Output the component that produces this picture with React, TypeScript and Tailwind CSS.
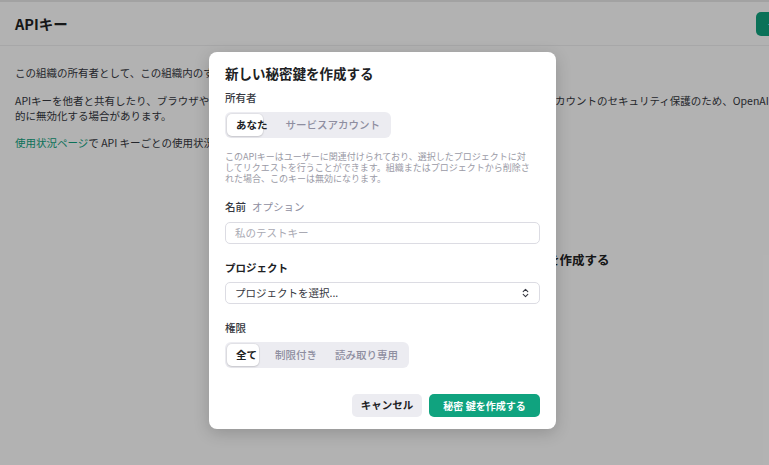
import React from "react";

function Segmented({
  items,
  pillWidth,
}: {
  items: string[];
  pillWidth: number;
}) {
  return (
    <div className="relative flex h-[26px] items-stretch self-start rounded-[6px] bg-[#ececf1] p-[2px]">
      <div
        className="absolute left-[2px] top-[2px] bottom-[2px] rounded-[5px] bg-white shadow-[0_0_0_1px_rgba(0,0,0,0.04),0_1px_2px_rgba(0,0,0,0.12)]"
        style={{ width: pillWidth }}
      />
      {items.map((it, i) => (
        <div
          key={it}
          className={
            i === 0
              ? "relative flex items-center px-[9px] text-[10.5px] leading-none font-semibold text-[#202123]"
              : "relative flex items-center px-[9px] text-[10.5px] leading-none font-medium text-[#8e8ea0]"
          }
        >
          {it}
        </div>
      ))}
    </div>
  );
}

export default function App() {
  return (
    <div className="relative h-[465px] w-[769px] overflow-hidden bg-white font-['Noto_Sans_CJK_JP','Noto_Sans',sans-serif] text-[#353740]">
      <div className="w-[1060px]">
        <div className="h-[2px] bg-[#e8e8e8]" />
        <div className="flex h-[44px] w-[919px] items-center border-b border-[#efeff1] px-[15px]">
          <div className="text-[14.5px] font-semibold text-[#202123]">APIキー</div>
          <div className="flex-1" />
          <div className="flex h-[24px] items-center rounded-[5px] bg-[#10a37f] px-[12px] text-[10.5px] font-semibold text-white">
            + 新しい秘密鍵を作成する
          </div>
        </div>
        <div className="px-[15px] pt-[19px] text-[10.5px] leading-[15px]">
          <p>この組織の所有者として、この組織内のすべてのAPIキーを表示および管理できます。</p>
          <p className="mt-[13px] whitespace-nowrap">
            APIキーを他者と共有したり、ブラウザやその他のクライアントサイドのコードで公開したりしないでください。アカウントのセキュリティ保護のため、OpenAIは公開されていることが判明したAPIキーを自動
            <br />
            的に無効化する場合があります。
          </p>
          <p className="mt-[12px]">
            <span className="text-[#10a37f]">使用状況ページ</span>で API キーごとの使用状況を確認できます。
          </p>
          <div className="mt-[102px] pl-[449px] text-[12.5px] font-semibold text-[#202123]">
            最初のAPIキーを作成する
          </div>
        </div>
      </div>

      {/* overlay */}
      <div className="absolute inset-0 bg-black/30" />

      {/* modal */}
      <div className="absolute inset-0 flex items-start justify-center pr-[4px] pt-[52px]">
        <div className="flex w-[347px] flex-col rounded-[8px] bg-white px-[16px] pb-[12px] pt-[11px] shadow-[0_4px_16px_rgba(0,0,0,0.18)]">
          <div className="text-[13.5px] font-semibold leading-[20px] text-[#202123]">
            新しい秘密鍵を作成する
          </div>
          <div className="mt-[7px] text-[10.5px] font-medium leading-[16px] text-[#353740]">
            所有者
          </div>
          <div className="mt-[6px] flex">
            <Segmented items={["あなた", "サービスアカウント"]} pillWidth={36} />
          </div>
          <p className="mt-[13px] text-[9px] leading-[11px] text-[#9a9aa6]">
            このAPIキーはユーザーに関連付けられており、選択したプロジェクトに対
            <br />
            してリクエストを行うことができます。組織またはプロジェクトから削除さ
            <br />
            れた場合、このキーは無効になります。
          </p>
          <div className="mt-[15px] flex items-center gap-[6px] leading-[16px]">
            <span className="text-[10.5px] font-medium text-[#353740]">名前</span>
            <span className="text-[10.5px] text-[#8e8ea0]">オプション</span>
          </div>
          <div className="mt-[7px] flex h-[22px] items-center rounded-[5px] border border-[#dcdce3] px-[9px] text-[10.5px] leading-none text-[#a9a9b3]">
            私のテストキー
          </div>
          <div className="mt-[16px] text-[10.5px] font-semibold leading-[16px] text-[#202123]">
            プロジェクト
          </div>
          <div className="mt-[6px] flex h-[22px] items-center justify-between rounded-[5px] border border-[#dcdce3] pl-[9px] pr-[10px] text-[10.5px] leading-none text-[#353740]">
            <span>プロジェクトを選択...</span>
            <svg width="7" height="10" viewBox="0 0 7 10" fill="none" stroke="#353740" strokeWidth="1.1" strokeLinecap="round" strokeLinejoin="round">
              <path d="M1.2 3.6 L3.5 1.4 L5.8 3.6" />
              <path d="M1.2 6.4 L3.5 8.6 L5.8 6.4" />
            </svg>
          </div>
          <div className="mt-[16px] text-[10.5px] font-medium leading-[16px] text-[#353740]">
            権限
          </div>
          <div className="mt-[6px] flex">
            <Segmented items={["全て", "制限付き", "読み取り専用"]} pillWidth={32} />
          </div>
          <div className="mt-[26px] flex justify-end gap-[7px]">
            <div className="flex h-[23px] w-[70px] items-center justify-center rounded-[5px] bg-[#ececf1] text-[10.5px] leading-none font-semibold text-[#202123]">
              キャンセル
            </div>
            <div className="flex h-[23px] w-[111px] items-center justify-center rounded-[5px] bg-[#10a37f] text-[10px] leading-none font-semibold text-white">
              秘密 鍵を作成する
            </div>
          </div>
        </div>
      </div>
    </div>
  );
}
